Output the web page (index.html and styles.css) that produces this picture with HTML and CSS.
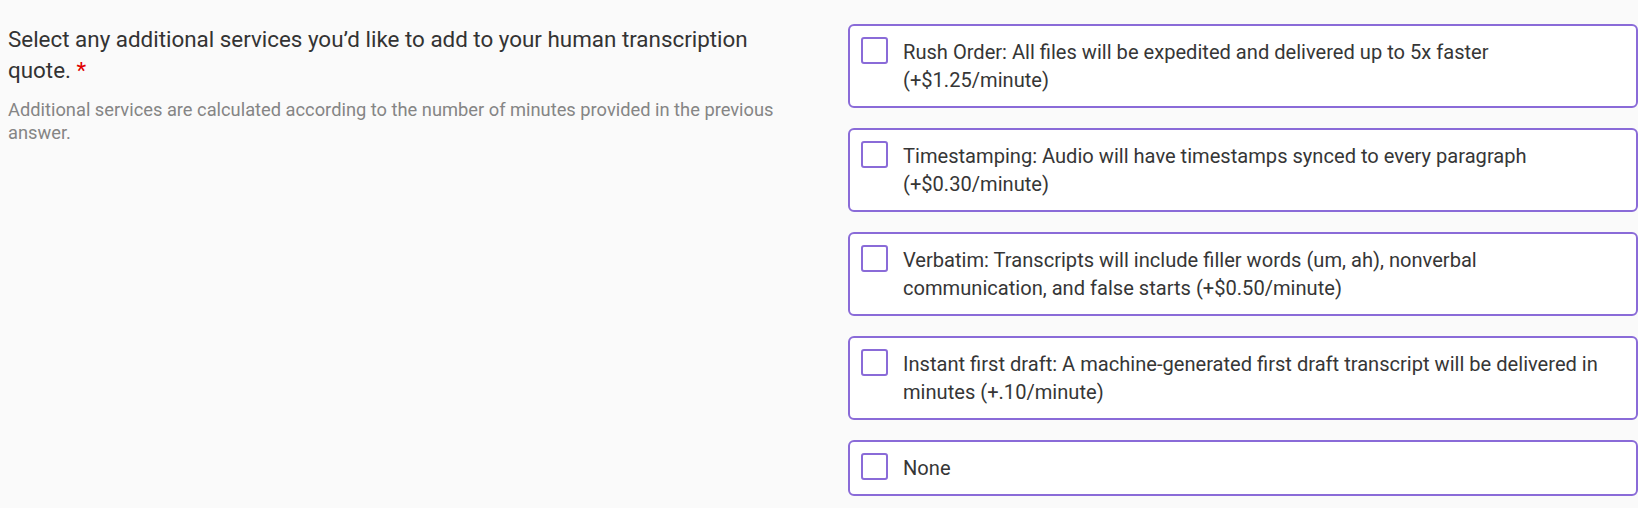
FILE: index.html
```html
<!DOCTYPE html>
<html lang="en">
<head>
<meta charset="utf-8">
<title>Additional services</title>
<link rel="stylesheet" href="styles.css">
</head>
<body>
<div class="question">
  <div class="prompt">
    <div class="title">Select any additional services you’d like to add to your human transcription quote. <span class="req">*</span></div>
    <div class="help">Additional services are calculated according to the number of minutes provided in the previous answer.</div>
  </div>
  <div class="options">
    <label class="option"><span class="box"></span><span class="label">Rush Order: All files will be expedited and delivered up to 5x faster (+$1.25/minute)</span></label>
    <label class="option"><span class="box"></span><span class="label">Timestamping: Audio will have timestamps synced to every paragraph (+$0.30/minute)</span></label>
    <label class="option"><span class="box"></span><span class="label">Verbatim: Transcripts will include filler words (um, ah), nonverbal communication, and false starts (+$0.50/minute)</span></label>
    <label class="option"><span class="box"></span><span class="label">Instant first draft: A machine-generated first draft transcript will be delivered in minutes (+.10/minute)</span></label>
    <label class="option"><span class="box"></span><span class="label">None</span></label>
  </div>
</div>
</body>
</html>
```
FILE: styles.css
```css
html, body {
  margin: 0;
  padding: 0;
  background: #fafafa;
}
body {
  font-family: Roboto, "Liberation Sans", Arial, sans-serif;
  color: #333;
}
.question {
  display: grid;
  grid-template-columns: 790px 790px;
  column-gap: 50px;
  padding: 24px 0 0 8px;
}
.title {
  font-size: 22.4px;
  line-height: 31px;
  color: #333;
}
.req {
  color: #e00000;
}
.help {
  margin-top: 12px;
  font-size: 18.3px;
  line-height: 23px;
  color: #858585;
}
.options {
  display: flex;
  flex-direction: column;
  gap: 20px;
}
.option {
  display: flex;
  align-items: flex-start;
  gap: 15px;
  background: #fff;
  border: 2px solid #8a6bd8;
  border-radius: 6px;
  padding: 12px 12px 12px 11px;
  cursor: pointer;
}
.box {
  flex: none;
  width: 23px;
  height: 23px;
  border: 2px solid #8a6bd8;
  border-radius: 3px;
  margin-top: -1px;
  background: #fff;
}
.label {
  font-size: 20.1px;
  line-height: 28px;
  color: #363636;
}
```
